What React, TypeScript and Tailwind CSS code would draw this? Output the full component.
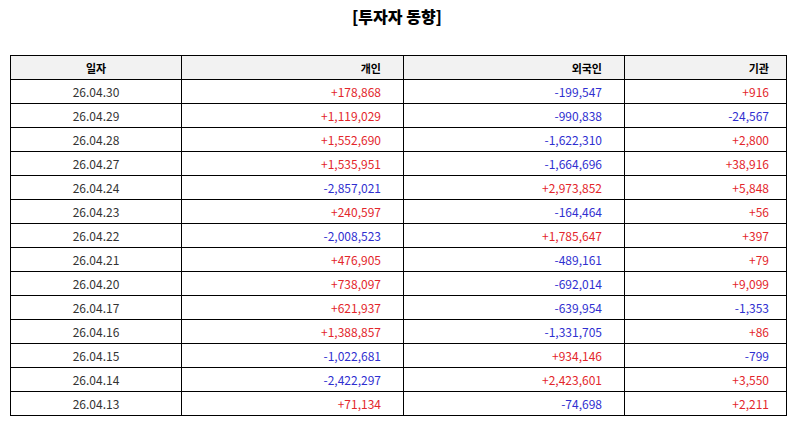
import React from "react";

type Row = [string, string, string, string];

const rows: Row[] = [
  ["26.04.30", "+178,868", "-199,547", "+916"],
  ["26.04.29", "+1,119,029", "-990,838", "-24,567"],
  ["26.04.28", "+1,552,690", "-1,622,310", "+2,800"],
  ["26.04.27", "+1,535,951", "-1,664,696", "+38,916"],
  ["26.04.24", "-2,857,021", "+2,973,852", "+5,848"],
  ["26.04.23", "+240,597", "-164,464", "+56"],
  ["26.04.22", "-2,008,523", "+1,785,647", "+397"],
  ["26.04.21", "+476,905", "-489,161", "+79"],
  ["26.04.20", "+738,097", "-692,014", "+9,099"],
  ["26.04.17", "+621,937", "-639,954", "-1,353"],
  ["26.04.16", "+1,388,857", "-1,331,705", "+86"],
  ["26.04.15", "-1,022,681", "+934,146", "-799"],
  ["26.04.14", "-2,422,297", "+2,423,601", "+3,550"],
  ["26.04.13", "+71,134", "-74,698", "+2,211"],
];

const color = (v: string) => (v.startsWith("-") ? "text-[#2f2fd0]" : "text-[#e3262b]");

export default function App() {
  return (
    <div
      className="w-[794px] h-[424px] bg-white"
      style={{ fontFamily: '"Noto Sans CJK KR", "Noto Sans", sans-serif' }}
    >
      <div className="pt-[4px] h-[55px] text-center text-[16px] leading-[24px] font-extrabold text-black">
        [투자자 동향]
      </div>
      <table className="ml-[10px] w-[776px] border-collapse table-fixed text-[12px] leading-[14px]">
        <colgroup>
          <col className="w-[171px]" />
          <col className="w-[222px]" />
          <col className="w-[221px]" />
          <col className="w-[162px]" />
        </colgroup>
        <thead>
          <tr className="h-[24px] bg-[#f2f2f2] text-black">
            <th className="border border-black text-center p-0 text-[11px] font-bold">일자</th>
            <th className="border border-black text-right p-0 pr-[22px] text-[11px] font-bold">개인</th>
            <th className="border border-black text-right p-0 pr-[22px] text-[11px] font-bold">외국인</th>
            <th className="border border-black text-right p-0 pr-[17px] text-[11px] font-bold">기관</th>
          </tr>
        </thead>
        <tbody>
          {rows.map((r) => (
            <tr key={r[0]} className="h-[24px]">
              <td className="border border-black text-center p-0 text-[#333333]">{r[0]}</td>
              <td className={`border border-black text-right p-0 pr-[22px] ${color(r[1])}`}>{r[1]}</td>
              <td className={`border border-black text-right p-0 pr-[22px] ${color(r[2])}`}>{r[2]}</td>
              <td className={`border border-black text-right p-0 pr-[17px] ${color(r[3])}`}>{r[3]}</td>
            </tr>
          ))}
        </tbody>
      </table>
    </div>
  );
}
